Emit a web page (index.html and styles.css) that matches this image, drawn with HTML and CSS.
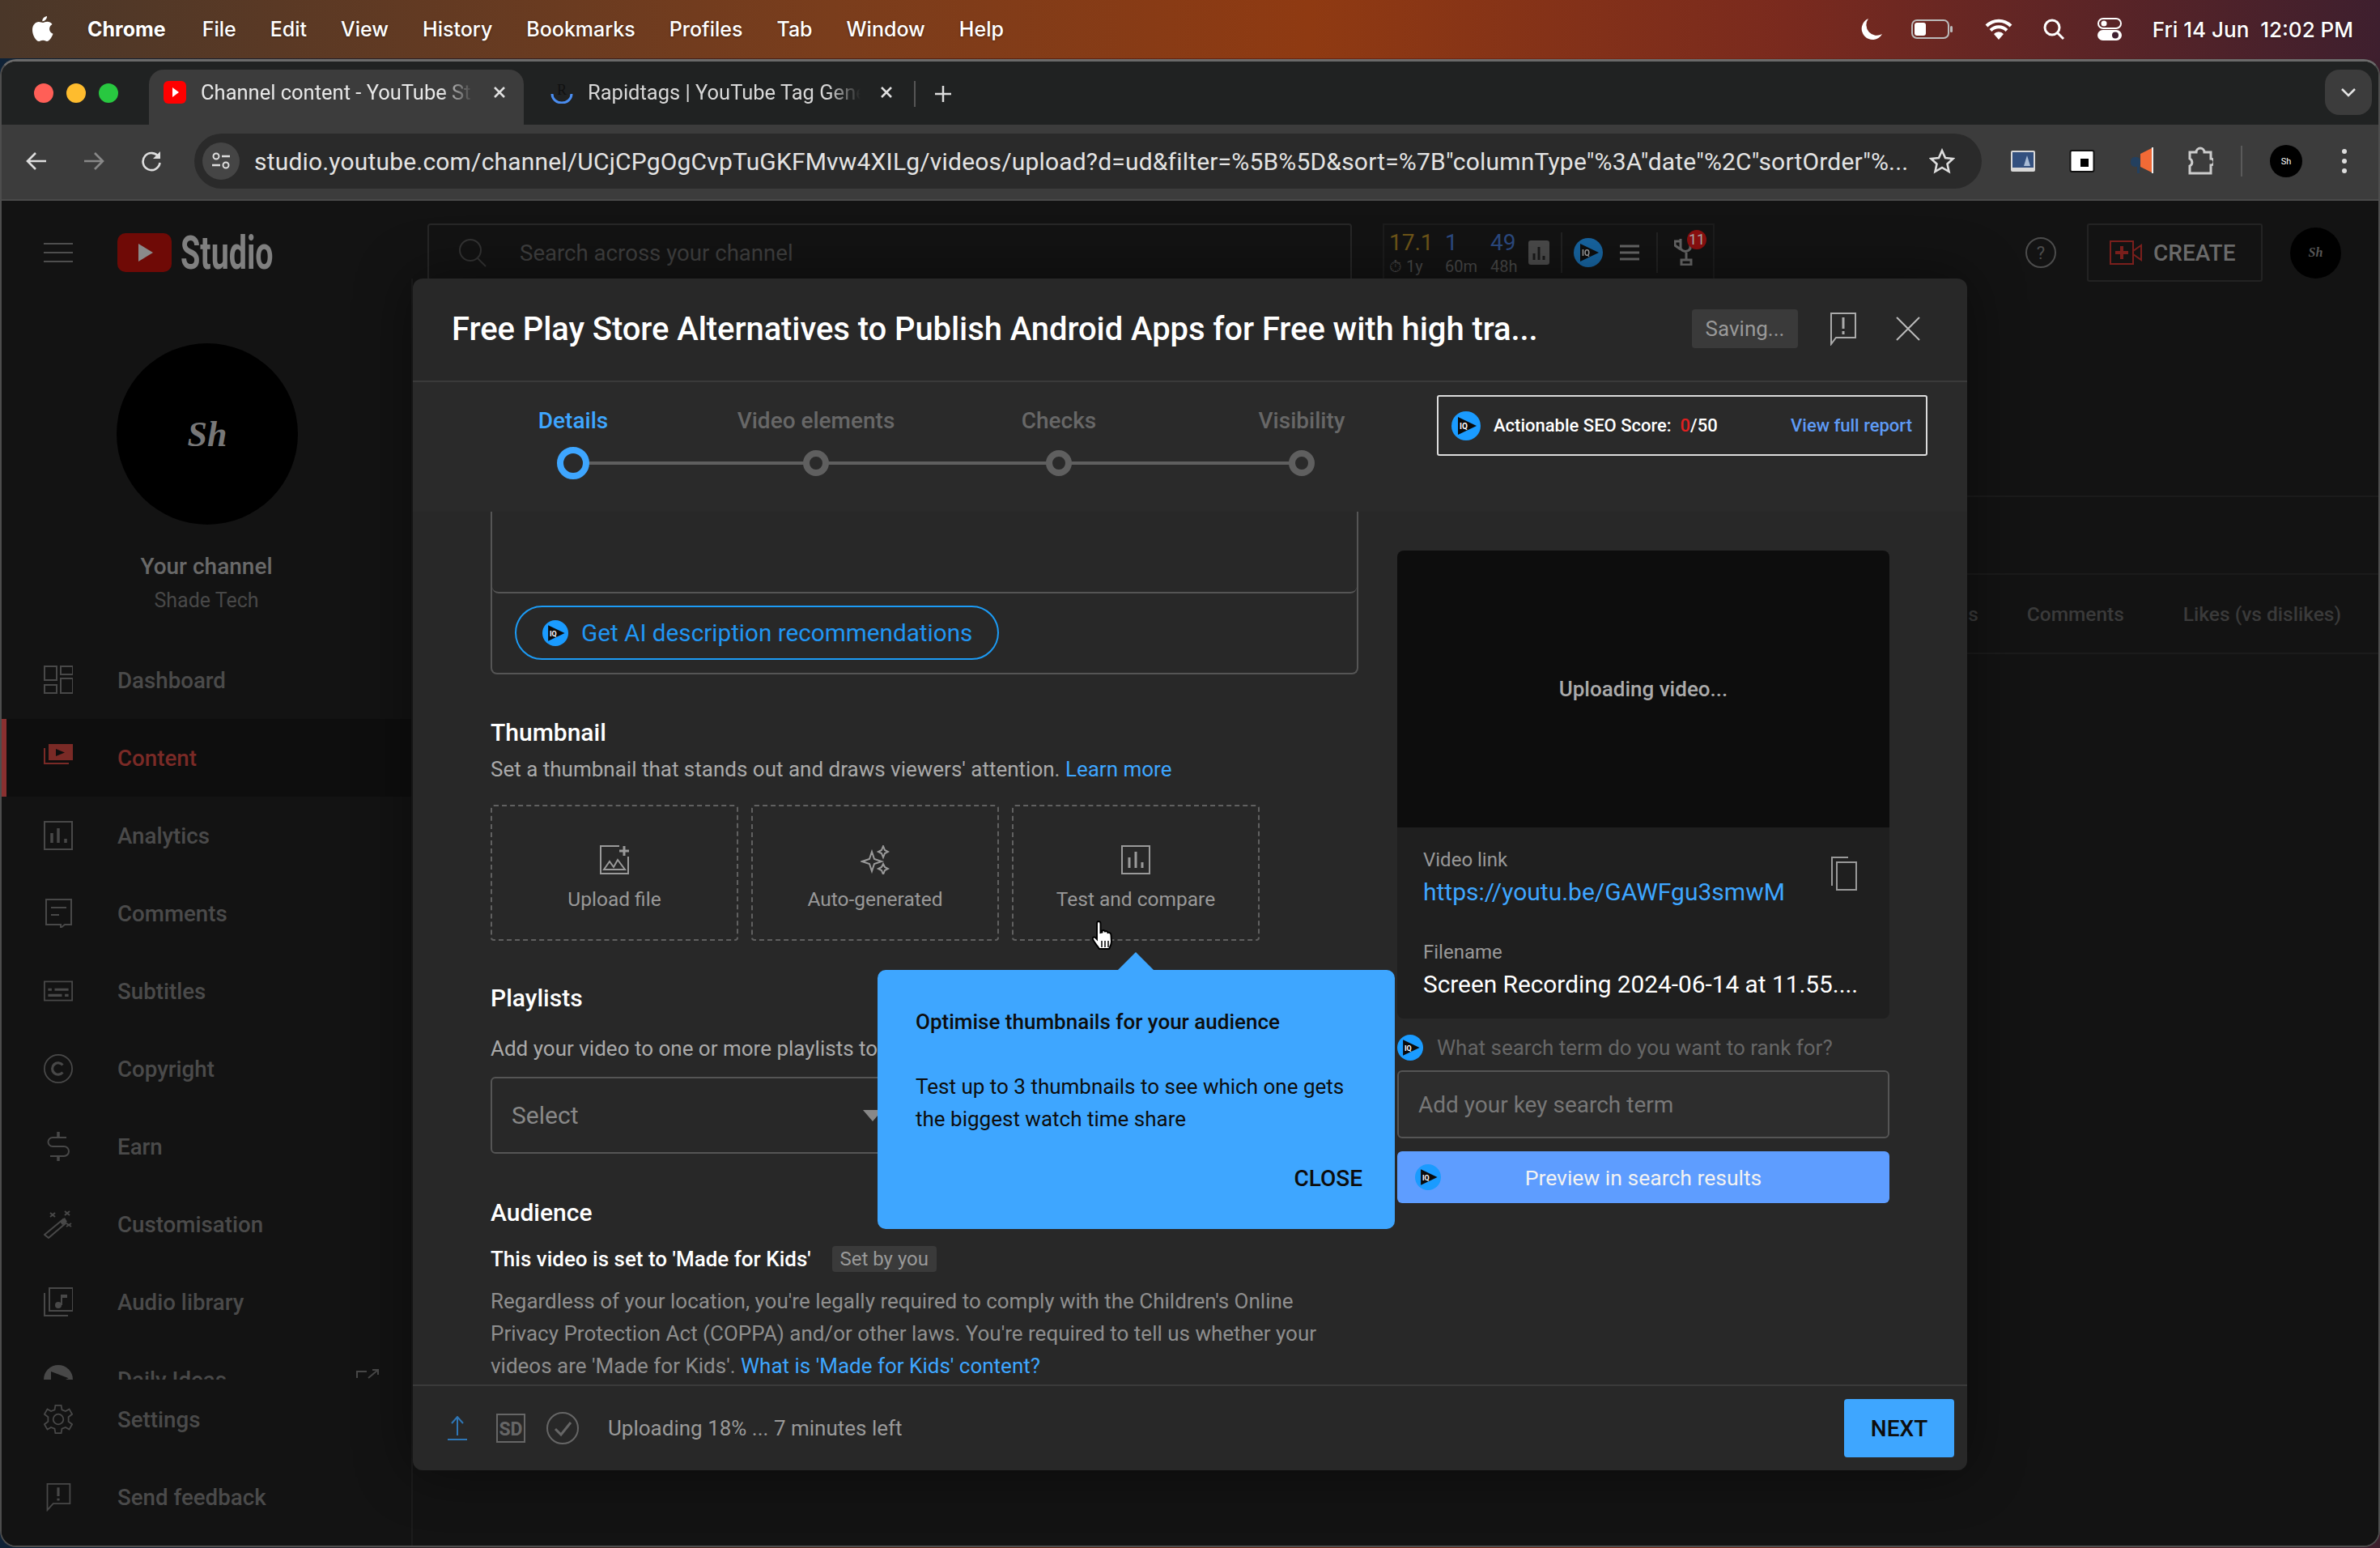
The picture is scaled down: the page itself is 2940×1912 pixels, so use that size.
FILE: index.html
```html
<!DOCTYPE html>
<html lang="en">
<head>
    <meta charset="UTF-8">
    <title>Channel content - YouTube Studio</title>
    <link rel="stylesheet" href="styles.css">
</head>
<body>

<svg class="sprite" width="0" height="0">
    <symbol id="iq" viewBox="0 0 36 36">
        <circle cx="18" cy="18" r="18" fill="#1a9bff"/>
        <path d="M8 7 L31 18 L8 29 Z" fill="#0b0b0b"/>
        <text x="10" y="22" font-size="10" font-weight="700" font-family="Roboto" fill="#fff">IQ</text>
    </symbol>
</svg>

<div class="menubar">
    <svg class="apple" viewBox="0 0 26 32"><path fill="#fff" d="M18 0c.3 3-2.600 6.400-5.700 6.200C12 3.300 15 .3 18 0zM13 8c1.500 0 3-1.200 5.500-1.200 2 0 4.500 1 6 3.200-5 3-4.300 9.700 1 11.700-1.300 3.500-4.300 9.300-7.500 9.300-1.700 0-2.700-1.200-4.900-1.200s-3.300 1.200-5 1.200C4.500 31 0 23.500 0 17 0 10.700 4 7 7.800 7c2.200 0 4 1 5.200 1z"/></svg>
    <span class="menu-app">Chrome</span>
    <span>File</span><span>Edit</span><span>View</span><span>History</span><span>Bookmarks</span>
    <span>Profiles</span><span>Tab</span><span>Window</span><span>Help</span>
    <div class="menu-right">
        <svg width="30" height="30" viewBox="0 0 30 30"><path fill="#fff" d="M11 2a13 13 0 0 0 17 19A13.500 13.500 0 1 1 11 2z"/></svg>
        <svg width="52" height="24" viewBox="0 0 52 24"><rect x="1" y="1" width="45" height="22" rx="6" fill="none" stroke="#bbb" stroke-width="2"/><rect x="4" y="4" width="14" height="16" rx="3" fill="#fff"/><rect x="48" y="8" width="3" height="8" rx="1.500" fill="#bbb"/></svg>
        <svg width="34" height="26" viewBox="0 0 34 26"><path fill="none" stroke="#fff" stroke-width="4" d="M2 9a21 21 0 0 1 30 0M7 14.500a14 14 0 0 1 20 0"/><path fill="#fff" d="M11 19a8 8 0 0 1 12 0l-6 7z"/></svg>
        <svg width="28" height="28" viewBox="0 0 28 28"><circle cx="12" cy="12" r="9" fill="none" stroke="#fff" stroke-width="3"/><path d="M18 18l8 8" stroke="#fff" stroke-width="3"/></svg>
        <svg width="30" height="28" viewBox="0 0 30 28"><rect x="1" y="1" width="28" height="12" rx="6" fill="none" stroke="#fff" stroke-width="2"/><circle cx="8" cy="7" r="3.500" fill="#fff"/><rect y="15" width="30" height="13" rx="6.500" fill="#fff"/><circle cx="22" cy="21.500" r="4" fill="#3e2030"/></svg>
        <span class="menu-clock">Fri 14 Jun&nbsp; 12:02 PM</span>
    </div>
</div>

<div class="window">
    <div class="tabstrip">
        <div class="lights"><i class="red"></i><i class="yellow"></i><i class="green"></i></div>
        <div class="tab tab-active">
            <svg class="favicon" viewBox="0 0 28 28"><rect width="28" height="28" rx="6" fill="#f00"/><path d="M11 8l8 6-8 6z" fill="#fff"/></svg>
            <span class="tab-title">Channel content - YouTube St</span>
            <svg class="tab-x" viewBox="0 0 16 16"><path d="M2 2l12 12M14 2L2 14" stroke="#e0e0e0" stroke-width="2.500"/></svg>
        </div>
        <div class="tab">
            <svg class="favicon" viewBox="0 0 28 28"><text x="8" y="17" font-size="18" font-family="Liberation Serif" fill="#111">R</text><path d="M2 16a12 11 0 0 0 24 0" fill="none" stroke="#4a8df0" stroke-width="3"/></svg>
            <span class="tab-title">Rapidtags | YouTube Tag Gene</span>
            <svg class="tab-x" viewBox="0 0 16 16"><path d="M2 2l12 12M14 2L2 14" stroke="#e0e0e0" stroke-width="2.500"/></svg>
        </div>
        <span class="tab-sep"></span>
        <svg class="tab-plus" viewBox="0 0 20 20"><path d="M10 0v20M0 10h20" stroke="#ddd" stroke-width="2.500"/></svg>
        <div class="tab-menu"><svg width="20" height="12" viewBox="0 0 20 12"><path d="M2 2l8 8 8-8" fill="none" stroke="#e3e3e3" stroke-width="2.500"/></svg></div>
    </div>

    <div class="toolbar">
        <svg class="nav-btn" viewBox="0 0 26 26"><path d="M25 13H3M12 3L2 13l10 10" fill="none" stroke="#ddd" stroke-width="2.600"/></svg>
        <svg class="nav-btn nav-off" viewBox="0 0 26 26"><path d="M1 13h22M14 3l10 10-10 10" fill="none" stroke="#888" stroke-width="2.600"/></svg>
        <svg class="nav-btn" viewBox="0 0 26 26"><path d="M22 8a10.500 10.500 0 1 0 1.500 7" fill="none" stroke="#ddd" stroke-width="2.600"/><path d="M24 1v9h-9z" fill="#ddd"/></svg>
        <div class="omnibox">
            <span class="site-info"><svg width="24" height="24" viewBox="0 0 24 24"><circle cx="6" cy="6" r="3.500" fill="none" stroke="#ddd" stroke-width="2"/><path d="M13 6h10M1 17h10" stroke="#ddd" stroke-width="2.500"/><circle cx="18" cy="17" r="3.500" fill="none" stroke="#ddd" stroke-width="2"/></svg></span>
            <span class="url">studio.youtube.com/channel/UCjCPgOgCvpTuGKFMvw4XILg/videos/upload?d=ud&amp;filter=%5B%5D&amp;sort=%7B"columnType"%3A"date"%2C"sortOrder"%...</span>
            <svg class="star" width="32" height="32" viewBox="0 0 32 32"><path d="M16 3l4 9 9.500 1-7 6.500 2 9.500-8.500-5-8.500 5 2-9.500-7-6.500 9.500-1z" fill="none" stroke="#ddd" stroke-width="2.600"/></svg>
        </div>
        <div class="ext-icons">
            <svg width="30" height="30" viewBox="0 0 30 30"><rect y="2" width="30" height="26" rx="2" fill="#d8d8d8"/><rect x="2" y="4" width="26" height="19" fill="#33507f"/><path d="M20 8l4 13h-8z" fill="#a9bcd6"/></svg>
            <svg width="32" height="32" viewBox="0 0 32 32"><rect x="1.500" y="3" width="29" height="26" rx="2" fill="#fff" stroke="#111" stroke-width="2"/><rect x="4" y="7" width="24" height="19" fill="#fff"/><rect x="14" y="13" width="10" height="10" fill="#000"/></svg>
            <svg width="30" height="34" viewBox="0 0 30 34"><path d="M14 8L28 1v30L14 24z" fill="#f26a36"/><path d="M28 0h2v32h-2z" fill="#eee"/><rect x="2" y="12" width="12" height="12" rx="5" fill="#23405f"/><rect x="10" y="22" width="3" height="10" fill="#23405f"/></svg>
            <svg width="32" height="36" viewBox="0 0 32 36"><path d="M3 7h8a5 5 0 0 1 10 0h8v8a4 4 0 0 1 0 8v10H3v-9a5 5 0 0 0 0-9z" fill="none" stroke="#ccc" stroke-width="3"/></svg>
            <span class="ext-sep"></span>
            <span class="mini-avatar">Sh</span>
            <svg class="dots" width="8" height="32" viewBox="0 0 8 32"><circle cx="4" cy="4" r="3" fill="#ddd"/><circle cx="4" cy="16" r="3" fill="#ddd"/><circle cx="4" cy="28" r="3" fill="#ddd"/></svg>
        </div>
    </div>

    <div class="app">
        <header class="topbar">
            <div class="brand">
                <svg class="burger" viewBox="0 0 36 26"><path d="M0 2h36M0 13h36M0 24h36" stroke="#4e4e4e" stroke-width="2"/></svg>
                <svg class="yt-logo" viewBox="0 0 67 48"><rect width="67" height="48" rx="10" fill="#6f0a06"/><path d="M26 13l18 11-18 11z" fill="#8a8a8a"/></svg>
                <span class="studio">Studio</span>
            </div>
            <div class="search">
                <svg width="36" height="36" viewBox="0 0 36 36"><circle cx="15" cy="15" r="13" fill="none" stroke="#333" stroke-width="2"/><path d="M24 25l10 10" stroke="#333" stroke-width="2"/></svg>
                <span>Search across your channel</span>
            </div>
            <div class="stats">
                <div class="stat-col stat-a"><b class="amber">17.1</b><small>⏱ 1y</small></div>
                <div class="stat-col stat-b"><b class="blue">1</b><small>60m</small></div>
                <div class="stat-col stat-c"><b class="blue">49</b><small>48h</small></div>
                <svg class="stat-chart" width="26" height="30" viewBox="0 0 26 30"><rect width="26" height="30" rx="3" fill="#4a4a4a"/><path d="M7 24v-8M13 24V8M19 24v-5" stroke="#1a1a1a" stroke-width="3"/></svg>
                <span class="stat-sep"></span>
                <svg width="36" height="36" class="iq-dim"><use href="#iq"/></svg>
                <svg class="stat-list" width="24" height="20" viewBox="0 0 24 20"><path d="M0 2h24M0 10h24M0 18h24" stroke="#666" stroke-width="3"/></svg>
                <span class="stat-sep"></span>
                <div class="trophy">
                    <svg width="30" height="36" viewBox="0 0 30 36"><path d="M8 3v12a7 7 0 0 0 12 0V3M8 6H1v5l7 5M15 20v8M9 29h12v6H9z" fill="none" stroke="#666" stroke-width="3"/></svg>
                    <span class="badge">11</span>
                </div>
            </div>
            <svg class="help" width="38" height="38" viewBox="0 0 38 38"><circle cx="19" cy="19" r="18" fill="none" stroke="#4c4c4c" stroke-width="2"/><text x="19" y="27" text-anchor="middle" font-size="22" font-family="Roboto" fill="#4c4c4c">?</text></svg>
            <div class="create">
                <svg width="40" height="30" viewBox="0 0 40 30"><rect x="1" y="1" width="28" height="28" fill="none" stroke="#7a1f1c" stroke-width="2"/><path d="M15 7v16M7 15h16" stroke="#7a1f1c" stroke-width="4"/><path d="M29 13l10-7v18l-10-7" fill="none" stroke="#7a1f1c" stroke-width="2"/></svg>
                <span>CREATE</span>
            </div>
            <span class="top-avatar">Sh</span>
        </header>

        <aside class="sidebar">
            <div class="profile">
                <div class="avatar">Sh</div>
                <div class="profile-name">Your channel</div>
                <div class="profile-sub">Shade Tech</div>
            </div>
            <nav class="nav">
                <a class="nav-item"><svg viewBox="0 0 36 36"><path d="M1 1h15v17H1zM1 24h15v10H1zM21 1h15v10H21zM21 16h15v18H21z"/></svg>Dashboard</a>
                <a class="nav-item nav-current"><svg viewBox="0 0 36 36"><path class="fill" d="M6 1h30v20H6z"/><path d="M15 7l11 4.500L15 16z" fill="#0e0e0e" stroke="none"/><path d="M1 6v19h30"/></svg>Content</a>
                <a class="nav-item"><svg viewBox="0 0 36 36"><path d="M1 1h34v34H1z"/><path class="thick" d="M10 27v-12M18 27V9M27 27v-5"/></svg>Analytics</a>
                <a class="nav-item"><svg viewBox="0 0 36 36"><path d="M3 1h31v31H26l-5 4v-4H3z"/><path d="M9 11h19M9 20h10"/></svg>Comments</a>
                <a class="nav-item"><svg viewBox="0 0 40 36"><path d="M1 5h38v26H1z"/><path class="thick" d="M6 16h5M15 16h19M6 24h19M29 24h5"/></svg>Subtitles</a>
                <a class="nav-item"><svg viewBox="0 0 40 40"><circle cx="20" cy="20" r="19"/><path class="thick" d="M26 15a8 8 0 1 0 0 10"/></svg>Copyright</a>
                <a class="nav-item"><svg viewBox="0 0 36 36"><path d="M28 7H11a5 5 0 0 0 0 11h14a6 6 0 0 1 0 12H8"/><path class="thick" d="M18 0v7M18 30v6"/></svg>Earn</a>
                <a class="nav-item"><svg viewBox="0 0 36 36"><path d="M1 31L24 12l3 5L6 35z"/><path class="fill" d="M20 15l6-5 3 5-6 4z"/><path d="M8 4l6 5M14 4l-6 5M26 2l6 5M32 2l-6 5M28 17l6 4M34 17l-6 4"/></svg>Customisation</a>
                <a class="nav-item"><svg viewBox="0 0 36 36"><path d="M7 1h29v28H7zM1 7v28h29"/><path d="M22 9v13"/><path class="fill" d="M22 9h7v4h-7z"/><circle class="fill" cx="18" cy="22" r="4"/></svg>Audio library</a>
                <a class="nav-item"><svg viewBox="0 0 40 40"><circle class="fill" cx="20" cy="20" r="20"/><path d="M10 9l24 9-24 12z" fill="#131313" stroke="none"/></svg>Daily Ideas<svg class="nav-ext" viewBox="0 0 28 28"><path d="M1 12V4h12M27 2L15 12M20 2h7v6"/></svg></a>
            </nav>
            <div class="nav-bottom">
                <a class="nav-item"><svg viewBox="0 0 40 40"><circle cx="20" cy="20" r="7"/><path d="M16 1h8l1 6 5 2 5-3 4 7-5 4v6l5 4-4 7-5-3-5 2-1 6h-8l-1-6-5-2-5 3-4-7 5-4v-6l-5-4 4-7 5 3 5-2z"/></svg>Settings</a>
                <a class="nav-item"><svg viewBox="0 0 36 40"><path d="M3 2h31v27H11l-8 9z"/><path class="thick" d="M18 7v12M18 22v3"/></svg>Send feedback</a>
            </div>
        </aside>

        <main class="behind">
            <div class="behind-row behind-first"></div>
            <div class="behind-row behind-second"></div>
            <div class="behind-row behind-head"><span class="behind-s">s</span><span>Comments</span><span class="behind-likes">Likes (vs dislikes)</span></div>
        </main>

        <section class="modal">
            <div class="modal-head">
                <h1 class="modal-title">Free Play Store Alternatives to Publish Android Apps for Free with high tra...</h1>
                <span class="saving">Saving...</span>
                <svg class="head-feedback" width="32" height="42" viewBox="0 0 32 42"><path d="M1 2h30v30H7l-6 8z" fill="none" stroke="#aaa" stroke-width="2"/><path d="M16 7v14M16 24v4" stroke="#aaa" stroke-width="3"/></svg>
                <svg class="head-close" width="30" height="30" viewBox="0 0 30 30"><path d="M1 1l28 28M29 1L1 29" stroke="#bbb" stroke-width="2"/></svg>
            </div>

            <div class="stepper">
                <div class="steps">
                    <div class="step step-on"><span>Details</span><i></i></div>
                    <div class="step"><span>Video elements</span><i></i></div>
                    <div class="step"><span>Checks</span><i></i></div>
                    <div class="step"><span>Visibility</span><i></i></div>
                </div>
                <div class="seo-box">
                    <svg width="36" height="36"><use href="#iq"/></svg>
                    <span class="seo-text">Actionable SEO Score: &nbsp;<em>0</em>/50</span>
                    <a class="seo-link">View full report</a>
                </div>
            </div>

            <div class="modal-body">
                <div class="form-col">
                    <div class="desc-box">
                        <div class="desc-input"></div>
                        <div class="desc-actions">
                            <div class="ai-btn"><svg width="32" height="32"><use href="#iq"/></svg>Get AI description recommendations</div>
                        </div>
                    </div>

                    <h2 class="section-title thumb-title">Thumbnail</h2>
                    <p class="section-desc">Set a thumbnail that stands out and draws viewers' attention. <a>Learn more</a></p>
                    <div class="tiles">
                        <div class="tile">
                            <svg width="36" height="36" viewBox="0 0 36 36"><path d="M24 1H1v34h34V14" fill="none" stroke="#9a9a9a" stroke-width="2"/><path d="M30 1v12M24 7h12" stroke="#9a9a9a" stroke-width="3"/><path d="M5 30l7-10 5 7 5-9 9 12z" fill="none" stroke="#9a9a9a" stroke-width="2"/></svg>
                            <span>Upload file</span>
                        </div>
                        <div class="tile">
                            <svg width="36" height="36" viewBox="0 0 36 36"><path d="M14 8l3 9 9 3-9 3-3 9-3-9-9-3 9-3zM28 1l2 5 4 2-4 2-2 5-2-5-4-2 4-2zM28 23l2 4 4 2-4 2-2 5-2-5-4-2 4-2z" fill="none" stroke="#9a9a9a" stroke-width="2"/></svg>
                            <span>Auto-generated</span>
                        </div>
                        <div class="tile">
                            <svg width="36" height="36" viewBox="0 0 36 36"><path d="M1 1h34v34H1z" fill="none" stroke="#9a9a9a" stroke-width="2"/><path d="M10 28V15M18 28V8M26 28v-7" stroke="#9a9a9a" stroke-width="3"/></svg>
                            <span>Test and compare</span>
                        </div>
                    </div>

                    <h2 class="section-title play-title">Playlists</h2>
                    <p class="section-desc play-desc">Add your video to one or more playlists to</p>
                    <div class="select-box">
                        <span>Select</span>
                        <i class="select-caret"></i>
                    </div>

                    <h2 class="section-title aud-title">Audience</h2>
                    <div class="kids-row"><b>This video is set to 'Made for Kids'</b><span class="chip">Set by you</span></div>
                    <p class="legal">Regardless of your location, you're legally required to comply with the Children's Online<br>Privacy Protection Act (COPPA) and/or other laws. You're required to tell us whether your<br>videos are 'Made for Kids'. <a>What is 'Made for Kids' content?</a></p>
                </div>

                <div class="side-col">
                    <div class="preview">Uploading video...</div>
                    <div class="video-info">
                        <div class="info-top">
                            <div>
                                <div class="info-label">Video link</div>
                                <a class="info-link">https://youtu.be/GAWFgu3smwM</a>
                            </div>
                            <svg width="32" height="42" viewBox="0 0 32 42"><path d="M1 36V1h20" fill="none" stroke="#999" stroke-width="2"/><path d="M7 7h24v34H7z" fill="none" stroke="#999" stroke-width="2"/></svg>
                        </div>
                        <div class="info-label info-file">Filename</div>
                        <div class="info-value">Screen Recording 2024-06-14 at 11.55....</div>
                    </div>
                    <div class="rank-label"><svg width="32" height="32"><use href="#iq"/></svg>What search term do you want to rank for?</div>
                    <div class="rank-input">Add your key search term</div>
                    <div class="rank-btn"><svg width="32" height="32"><use href="#iq"/></svg><span>Preview in search results</span></div>
                </div>
            </div>

            <div class="modal-foot">
                <svg width="24" height="30" viewBox="0 0 24 30"><path d="M12 24V2M5 9l7-8 7 8M0 29h24" fill="none" stroke="#2f76b5" stroke-width="2"/></svg>
                <svg class="foot-sd" width="36" height="36" viewBox="0 0 36 36"><path d="M1 1h34v34H1z" fill="none" stroke="#666" stroke-width="2"/><text x="18" y="27" text-anchor="middle" font-size="23" font-weight="700" font-family="Roboto" fill="#666">SD</text></svg>
                <svg class="foot-check" width="40" height="40" viewBox="0 0 40 40"><circle cx="20" cy="20" r="19" fill="none" stroke="#666" stroke-width="2"/><path d="M11 21l7 7 12-15" fill="none" stroke="#666" stroke-width="3"/></svg>
                <span class="foot-text">Uploading 18% ... 7 minutes left</span>
                <button class="next-btn">NEXT</button>
            </div>

            <div class="tip">
                <div class="tip-title">Optimise thumbnails for your audience</div>
                <p class="tip-text">Test up to 3 thumbnails to see which one gets<br>the biggest watch time share</p>
                <div class="tip-close">CLOSE</div>
            </div>

            <svg class="hand" width="30" height="40" viewBox="0 0 30 40"><path d="M9 2c2 0 2.500 1 2.500 3v11l2-.5v-2c2-1 3 0 3.500 1 2-1 3 0 3.500 1.500 2-.5 4 .5 4 3l.5 8c0 4-2 7-3 9H10c-2-3-7-9-8-12-.5-2 1-3 3-2l2 2V5c0-2 .5-3 2-3z" fill="#fff" stroke="#000" stroke-width="2"/><path d="M13 26v8M17 26v8M21 26v8" stroke="#000" stroke-width="1.500"/></svg>
        </section>
    </div>
</div>

</body>
</html>
```

FILE: styles.css
```css
* {
    box-sizing: border-box;
}
html, body {
    margin: 0;
    height: 100%;
}
body {
    width: 2940px;
    height: 1912px;
    overflow: hidden;
    font-family: Roboto, "Liberation Sans", sans-serif;
    background: linear-gradient(90deg, #0f2236 0%, #5a2312 40%, #7a2814 70%, #3d1f2d 100%);
    color: #fff;
}
a {
    color: #3ea6ff;
}
.sprite {
    display: none;
}

/* mac menu bar */
.menubar {
    height: 72px;
    display: flex;
    align-items: center;
    gap: 42px;
    padding: 0 33px 0 40px;
    font-family: Inter, Roboto, sans-serif;
    font-size: 25px;
    font-weight: 500;
    background: linear-gradient(90deg, #4a3729 0%, #7a3d1c 35%, #8f3a12 55%, #7a2a1e 75%, #3e1f2e 100%);
    text-shadow: 0 1px 3px rgba(0,0,0,.4);
}
.apple {
    width: 26px;
    height: 32px;
}
.menu-app {
    font-weight: 700;
    margin-right: 3px;
}
.menu-right {
    margin-left: auto;
    display: flex;
    align-items: center;
    gap: 34px;
}
.menu-right svg:nth-child(3) {
    margin-left: 5px;
}
.menu-right svg:nth-child(4) {
    margin-left: 3px;
}
.menu-right svg:nth-child(5) {
    margin-left: 6px;
}
.menu-clock {
    margin-left: 4px;
    font-size: 26px;
}

/* browser window */
.window {
    height: 1838px;
    margin-top: 1px;
    border: 2px solid #4d4d4d;
    border-top: 3px solid #6a6a6a;
    border-radius: 20px;
    overflow: hidden;
    display: flex;
    flex-direction: column;
    background: #131313;
}
.tabstrip {
    height: 78px;
    flex: none;
    padding-top: 10px;
    display: flex;
    background: #202222;
}
.lights {
    width: 182px;
    padding: 17px 0 0 40px;
    display: flex;
    gap: 16px;
}
.lights i {
    width: 24px;
    height: 24px;
    border-radius: 50%;
}
.red { background: #ff5f57; }
.yellow { background: #febc2e; }
.green { background: #28c840; }
.tab {
    padding: 0 0 12px 18px;
    display: flex;
    align-items: center;
    gap: 18px;
    font-size: 25.500px;
    color: #d8d8d8;
}
.tab-active {
    width: 463px;
    color: #e8e8e8;
    background: #3c3c3c;
    border-radius: 18px 18px 0 0;
}
.tab:not(.tab-active) {
    width: 482px;
    padding-left: 33px;
}
.favicon {
    width: 28px;
    height: 28px;
    flex: none;
}
.tab-title {
    width: 337px;
    flex: none;
    white-space: nowrap;
    -webkit-mask-image: linear-gradient(90deg, #000 88%, transparent);
}
.tab-x {
    width: 16px;
    height: 16px;
    margin-left: 6px;
}
.tab-sep {
    width: 2px;
    height: 32px;
    margin: 14px 0 0 0;
    background: #555;
}
.tab-plus {
    width: 20px;
    height: 20px;
    margin: 20px 0 0 24px;
}
.tab-menu {
    width: 58px;
    height: 56px;
    margin: 0 8px 0 auto;
    display: flex;
    align-items: center;
    justify-content: center;
    background: #3c3c3c;
    border-radius: 18px;
}
.toolbar {
    height: 94px;
    flex: none;
    padding: 12px 0 14px 30px;
    display: flex;
    align-items: center;
    background: #3c3c3c;
    border-bottom: 2px solid #4a4a4a;
}
.nav-btn {
    width: 26px;
    height: 26px;
    margin-right: 45px;
}
.omnibox {
    width: 2208px;
    height: 68px;
    margin-left: -5px;
    padding: 0 33px 0 10px;
    display: flex;
    align-items: center;
    background: #2a2a2a;
    border-radius: 34px;
}
.site-info {
    width: 46px;
    height: 46px;
    flex: none;
    display: flex;
    align-items: center;
    justify-content: center;
    background: #454545;
    border-radius: 50%;
}
.url {
    margin-left: 18px;
    font-size: 30px;
    letter-spacing: .18px;
    white-space: nowrap;
    color: #e3e3e3;
}
.star {
    margin-left: auto;
}
.ext-icons {
    margin-left: 36px;
    display: flex;
    align-items: center;
    gap: 42px;
}
.ext-sep {
    width: 2px;
    height: 38px;
    margin: 0 -8px;
    background: #5a5a5a;
}
.mini-avatar {
    width: 40px;
    height: 40px;
    display: flex;
    align-items: center;
    justify-content: center;
    font-size: 11px;
    background: #000;
    border-radius: 50%;
}
.dots {
    margin-left: 6px;
}

/* studio page behind the dialog */
.app {
    flex: 1;
    min-height: 0;
    position: relative;
    display: grid;
    grid-template-columns: 508px minmax(0, 1fr);
    grid-template-rows: 96px minmax(0, 1fr);
    background: #131313;
}
.topbar {
    grid-column: 1 / 3;
    height: 96px;
    padding: 32px 46px 0 0;
    display: flex;
    align-items: center;
}
.brand {
    width: 526px;
    flex: none;
    padding-left: 52px;
    display: flex;
    align-items: center;
}
.burger {
    width: 36px;
    height: 26px;
    margin-right: 55px;
}
.yt-logo {
    width: 67px;
    height: 48px;
}
.studio {
    margin-left: 11px;
    font-size: 58px;
    font-weight: 700;
    color: #808080;
    transform: scaleX(.68);
    transform-origin: left center;
}
.search {
    width: 1142px;
    height: 72px;
    flex: none;
    padding-left: 36px;
    display: flex;
    align-items: center;
    gap: 40px;
    font-size: 27.600px;
    color: #3f3f3f;
    border: 2px solid #272727;
    border-radius: 4px;
}
.stats {
    width: 410px;
    height: 72px;
    flex: none;
    margin-left: 38px;
    padding: 0 6px;
    display: flex;
    align-items: center;
    border: 2px solid #1c1c1c;
}
.stat-col {
    display: flex;
    flex-direction: column;
    align-items: flex-start;
}
.stat-a { width: 69px; }
.stat-b { width: 56px; }
.stat-c { width: 47px; }
.stat-col b {
    font-size: 28px;
    font-weight: 400;
    line-height: 34px;
}
.stat-col small {
    font-size: 20px;
    line-height: 24px;
    white-space: nowrap;
    color: #474747;
}
.amber { color: #6e5518; }
.blue { color: #2c4a80; }
.stat-sep {
    width: 2px;
    height: 50px;
    margin: 0 14px 0 14px;
    background: #222;
}
.stat-list {
    margin-left: 21px;
    margin-right: 7px;
}
.iq-dim {
    opacity: .6;
}
.trophy {
    position: relative;
    margin-left: 6px;
}
.badge {
    position: absolute;
    top: -8px;
    right: -10px;
    width: 24px;
    height: 24px;
    font-size: 18px;
    line-height: 24px;
    text-align: center;
    color: #aaa;
    background: #8b0f0f;
    border-radius: 50%;
}
.help {
    margin-left: auto;
}
.create {
    width: 217px;
    height: 72px;
    margin-left: 38px;
    padding-left: 26px;
    display: flex;
    align-items: center;
    gap: 14px;
    font-size: 28px;
    font-weight: 500;
    color: #6a6a6a;
    border: 2px solid #232323;
    border-radius: 3px;
}
.top-avatar {
    width: 63px;
    height: 63px;
    margin-left: 34px;
    display: flex;
    align-items: center;
    justify-content: center;
    font: italic 700 16px "Liberation Serif", serif;
    color: #555;
    background: #000;
    border-radius: 50%;
}

.sidebar {
    min-height: 0;
    display: flex;
    flex-direction: column;
    border-right: 2px solid #1c1c1c;
}
.profile {
    height: 448px;
    flex: none;
    padding-top: 80px;
    display: flex;
    flex-direction: column;
    align-items: center;
}
.avatar {
    width: 224px;
    height: 224px;
    margin-left: 2px;
    display: flex;
    align-items: center;
    justify-content: center;
    font: italic 700 44px "Liberation Serif", serif;
    color: #777;
    background: #000;
    border-radius: 50%;
}
.profile-name {
    margin-top: 34px;
    font-size: 28px;
    font-weight: 500;
    line-height: 36px;
    color: #696969;
}
.profile-sub {
    margin-top: 8px;
    font-size: 25px;
    line-height: 32px;
    color: #484848;
}
.nav {
    height: 912px;
    flex: none;
    overflow: hidden;
}
.nav-bottom {
    padding-top: 1px;
}
.nav-item {
    height: 96px;
    padding-left: 52px;
    display: flex;
    align-items: center;
    gap: 55px;
    font-size: 27.700px;
    font-weight: 500;
    color: #4a4a4a;
}
.nav-item svg {
    width: 36px;
    height: 36px;
    flex: none;
    fill: none;
    stroke: #484848;
    stroke-width: 2;
}
.nav-item svg .thick {
    stroke-width: 3.500;
}
.nav-item svg .fill {
    fill: #484848;
    stroke: none;
}
.nav-item .nav-ext {
    width: 28px;
    height: 28px;
    margin-left: auto;
    margin-right: 40px;
}
.nav-current {
    color: #7a2a26;
    background: #0e0e0e;
    box-shadow: inset 6px 0 0 #8a3030;
}
.nav-current svg {
    stroke: #7a2a26;
}
.nav-current svg .fill {
    fill: #7a2a26;
}
.behind {
    min-width: 0;
    padding-top: 268px;
    font-size: 24.500px;
    font-weight: 500;
    color: #3a3a3a;
}
.behind-row {
    border-bottom: 2px solid #1b1b1b;
}
.behind-first {
    height: 2px;
}
.behind-second {
    height: 96px;
}
.behind-head {
    height: 98px;
    padding-right: 46px;
    display: flex;
    align-items: center;
    justify-content: flex-end;
    white-space: nowrap;
}
.behind-s {
    margin-right: 60px;
}
.behind-likes {
    margin-left: 73px;
}

/* upload dialog */
.modal {
    position: absolute;
    top: 96px;
    left: 508px;
    width: 1920px;
    height: 1472px;
    display: flex;
    flex-direction: column;
    background: #282828;
    border-radius: 12px;
    box-shadow: 0 0 70px rgba(0,0,0,.45);
}
.modal-head {
    height: 128px;
    flex: none;
    padding: 0 58px 2px 48px;
    display: flex;
    align-items: center;
    border-bottom: 2px solid #3a3a3a;
}
.modal-title {
    flex: 1;
    margin: 0;
    font-size: 40px;
    font-weight: 500;
    letter-spacing: -.08px;
    white-space: nowrap;
}
.saving {
    width: 131px;
    height: 48px;
    display: flex;
    align-items: center;
    justify-content: center;
    font-size: 26px;
    color: #999;
    background: #3a3a3a;
    border-radius: 4px;
}
.head-feedback {
    margin-left: 40px;
}
.head-close {
    margin-left: 49px;
}
.stepper {
    height: 160px;
    flex: none;
    padding-left: 48px;
    display: flex;
    align-items: flex-start;
    background: #2a2a2a;
}
.steps {
    width: 1200px;
    padding-top: 30px;
    display: grid;
    grid-template-columns: repeat(4, 300px);
}
.step {
    position: relative;
    display: flex;
    flex-direction: column;
    align-items: center;
    font-size: 28px;
    font-weight: 500;
    line-height: 36px;
    color: #676767;
}
.step i {
    position: relative;
    z-index: 1;
    width: 32px;
    height: 32px;
    margin-top: 18px;
    background: #2a2a2a;
    border: 8px solid #5f5f5f;
    border-radius: 50%;
}
.step:not(:first-child)::before {
    content: "";
    position: absolute;
    left: -50%;
    top: 68px;
    width: 100%;
    height: 4px;
    background: #5f5f5f;
}
.step-on {
    color: #3ea6ff;
}
.step-on i {
    width: 40px;
    height: 40px;
    margin-top: 14px;
    border-color: #3ea6ff;
}
.seo-box {
    width: 606px;
    height: 75px;
    margin: 16px 0 0 17px;
    padding: 0 17px 0 16px;
    display: flex;
    align-items: center;
    font-size: 22px;
    font-weight: 500;
    border: 2px solid #dcdcdc;
    border-radius: 3px;
}
.seo-text {
    margin-left: 16px;
}
.seo-text em {
    font-style: normal;
    color: #e02020;
}
.seo-link {
    margin-left: auto;
    color: #5e9bf5;
}
.modal-body {
    flex: 1;
    min-height: 0;
    overflow: hidden;
    padding-left: 96px;
    display: grid;
    grid-template-columns: 1072px 608px;
    gap: 48px;
}
.desc-box {
    height: 201px;
    border: 2px solid #555;
    border-top: 0;
    border-radius: 0 0 8px 8px;
}
.desc-input {
    height: 101px;
    border-bottom: 2px solid #555;
    border-radius: 0 0 8px 8px;
}
.desc-actions {
    padding: 15px 0 0 28px;
}
.ai-btn {
    width: 598px;
    height: 67px;
    padding-left: 32px;
    display: flex;
    align-items: center;
    gap: 16px;
    font-size: 29.700px;
    color: #2196f3;
    border: 2px solid #1c9bf5;
    border-radius: 34px;
}
.section-title {
    margin: 0;
    font-size: 30px;
    font-weight: 500;
    line-height: 36px;
}
.section-desc {
    margin: 9px 0 0;
    font-size: 26px;
    line-height: 36px;
    white-space: nowrap;
    color: #aaa;
}
.thumb-title { margin-top: 54px; }
.play-title { margin-top: 53px; }
.play-desc { margin-top: 26px; }
.aud-title { margin-top: 55px; }
.tiles {
    margin-top: 26px;
    display: flex;
    gap: 16px;
}
.tile {
    width: 306px;
    height: 168px;
    padding-top: 48px;
    display: flex;
    flex-direction: column;
    align-items: center;
    gap: 16px;
    font-size: 24.500px;
    line-height: 30px;
    color: #999;
    border: 2px dashed #606060;
    border-radius: 4px;
}
.select-box {
    height: 95px;
    margin-top: 17px;
    padding: 0 24px;
    display: flex;
    align-items: center;
    justify-content: space-between;
    font-size: 30px;
    color: #888;
    border: 2px solid #555;
    border-radius: 6px;
}
.select-caret {
    width: 0;
    height: 0;
    margin-right: 562px;
    border-left: 12px solid transparent;
    border-right: 12px solid transparent;
    border-top: 14px solid #888;
}
.kids-row {
    height: 32px;
    margin-top: 23px;
    display: flex;
    align-items: center;
    gap: 26px;
    font-size: 26px;
}
.kids-row b {
    font-weight: 500;
}
.chip {
    width: 129px;
    height: 32px;
    display: flex;
    align-items: center;
    justify-content: center;
    font-size: 24px;
    color: #999;
    background: #3a3a3a;
    border-radius: 4px;
}
.legal {
    margin: 16px 0 0;
    font-size: 26px;
    line-height: 40px;
    white-space: nowrap;
    color: #8e8e8e;
}
.side-col {
    padding-top: 48px;
}
.preview {
    height: 342px;
    display: flex;
    align-items: center;
    justify-content: center;
    font-size: 26px;
    font-weight: 500;
    color: #aaa;
    background: #0d0d0d;
    border-radius: 8px 8px 0 0;
}
.video-info {
    height: 236px;
    padding: 26px 32px 0;
    background: #1f1f1f;
    border-radius: 0 0 8px 8px;
}
.info-top {
    display: flex;
    justify-content: space-between;
    align-items: flex-start;
}
.info-top svg {
    margin: 10px 8px 0 0;
}
.info-label {
    font-size: 24px;
    line-height: 28px;
    color: #999;
}
.info-link {
    display: block;
    margin-top: 6px;
    font-size: 30px;
    line-height: 40px;
}
.info-file {
    margin-top: 40px;
}
.info-value {
    margin-top: 6px;
    font-size: 29.800px;
    line-height: 40px;
    white-space: nowrap;
}
.rank-label {
    margin-top: 20px;
    display: flex;
    align-items: center;
    gap: 17px;
    font-size: 26px;
    color: #666;
}
.rank-input {
    height: 84px;
    margin-top: 12px;
    padding-left: 24px;
    display: flex;
    align-items: center;
    font-size: 28px;
    color: #777;
    background: #2d2d2d;
    border: 2px solid #555;
    border-radius: 6px;
}
.rank-btn {
    height: 64px;
    margin-top: 16px;
    padding-left: 22px;
    display: flex;
    align-items: center;
    font-size: 26.500px;
    color: #f2f2f2;
    background: #5e9dff;
    border-radius: 6px;
}
.rank-btn span {
    flex: 1;
    text-align: center;
    margin-right: 54px;
}
.modal-foot {
    height: 106px;
    flex: none;
    padding: 0 16px 0 43px;
    display: flex;
    align-items: center;
    border-top: 2px solid #3a3a3a;
}
.foot-sd {
    margin-left: 36px;
}
.foot-check {
    margin-left: 26px;
}
.foot-text {
    margin-left: 36px;
    font-size: 26px;
    color: #999;
}
.next-btn {
    width: 136px;
    height: 72px;
    margin-left: auto;
    font: 500 28px Roboto, sans-serif;
    color: #0d0d0d;
    background: #3ea6ff;
    border: none;
    border-radius: 4px;
}
.tip {
    position: absolute;
    left: 574px;
    top: 854px;
    width: 639px;
    height: 320px;
    padding: 46px 40px 0 47px;
    font-size: 26px;
    color: #0d0d0d;
    background: #3ea6ff;
    border-radius: 10px;
}
.tip::before {
    content: "";
    position: absolute;
    left: 297px;
    top: -22px;
    border-left: 22px solid transparent;
    border-right: 22px solid transparent;
    border-bottom: 22px solid #3ea6ff;
}
.tip-title {
    font-weight: 500;
    line-height: 36px;
}
.tip-text {
    margin: 42px 0 0;
    line-height: 40px;
}
.tip-close {
    margin-top: 37px;
    text-align: right;
    font-size: 28px;
    font-weight: 500;
}
.hand {
    position: absolute;
    left: 838px;
    top: 792px;
}
```
